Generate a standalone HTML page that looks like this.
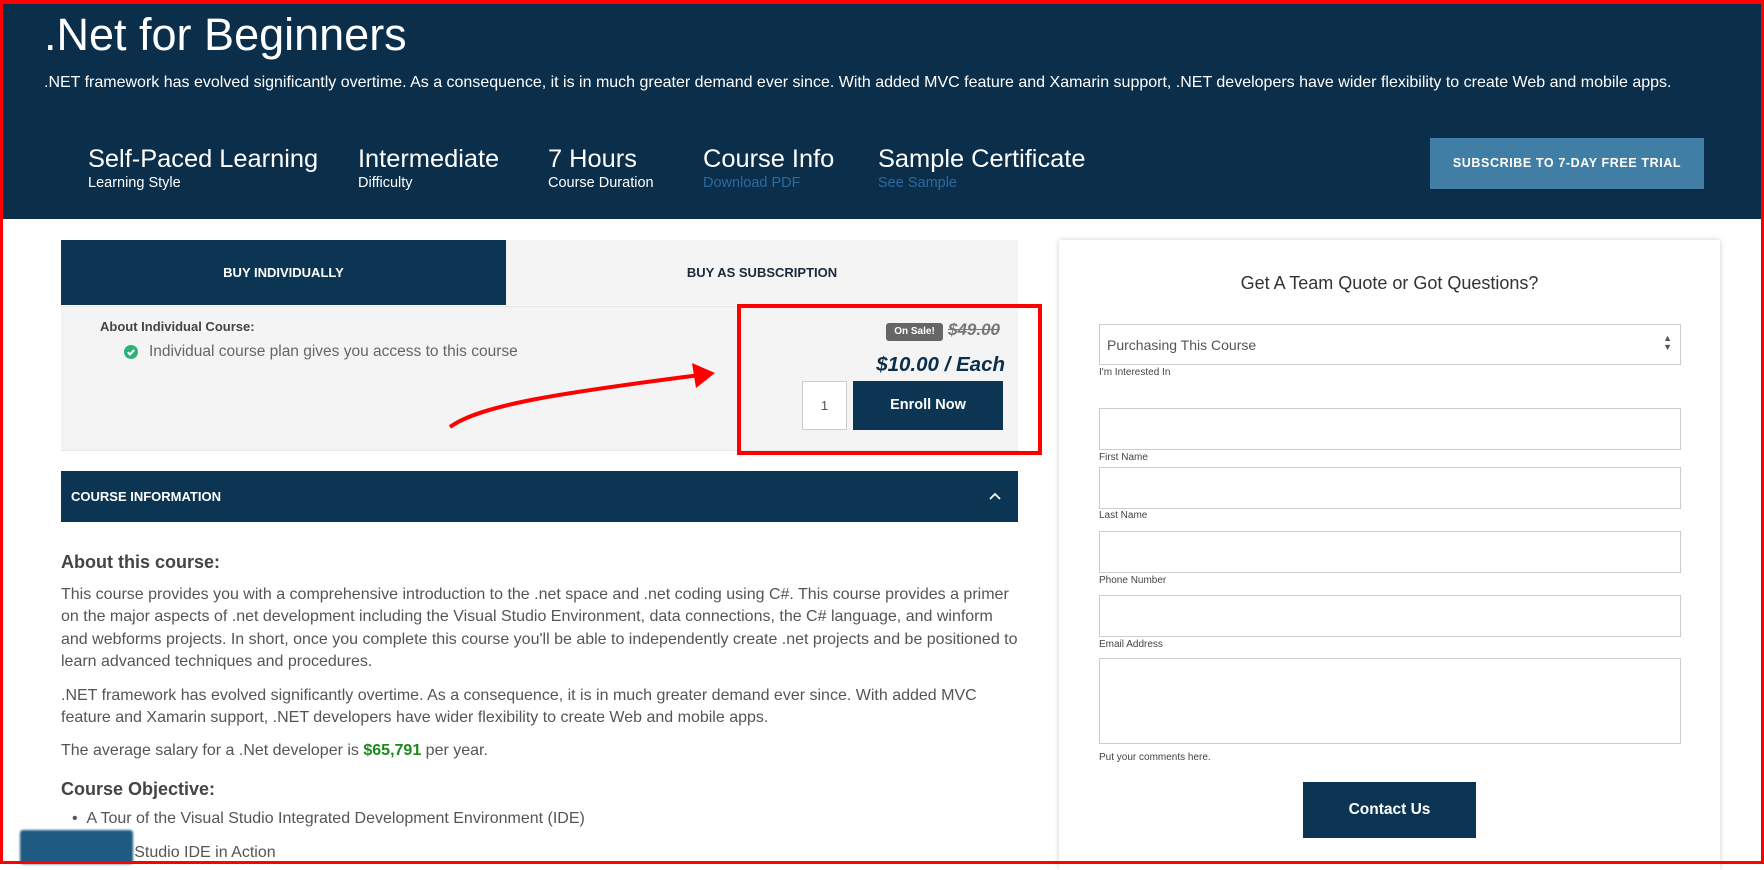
<!DOCTYPE html>
<html><head><meta charset="utf-8"><style>
*{box-sizing:border-box;margin:0;padding:0}
body{width:1764px;height:864px;overflow:hidden;background:#fff;font-family:"Liberation Sans",sans-serif;position:relative}
.a{position:absolute;white-space:nowrap}
.hdr{position:absolute;left:0;top:0;width:1764px;height:219px;background:#0b2f4b}
.w{color:#fff}
.big{font-size:25.4px;font-weight:300;color:#fff}
.lab{font-size:14.5px;color:#fff}
.lnk{font-size:14.5px;color:#2a6aa0}
.p{font-size:16px;color:#555;line-height:22.3px;position:absolute;left:61px;width:960px}
.inp{position:absolute;left:1099px;width:582px;height:42px;border:1px solid #ccc;background:#fff}
.fl{position:absolute;left:1099px;font-size:10px;color:#444}
</style></head><body>
<div class="hdr"></div>
<div class="a w" style="left:44px;top:9px;font-size:45px;font-weight:300">.Net for Beginners</div>
<div class="a w" style="left:44px;top:74px;font-size:16px">.NET framework has evolved significantly overtime. As a consequence, it is in much greater demand ever since. With added MVC feature and Xamarin support, .NET developers have wider flexibility to create Web and mobile apps.</div>
<div class="a big" style="left:88px;top:145px">Self-Paced Learning</div><div class="a lab" style="left:88px;top:175px">Learning Style</div>
<div class="a big" style="left:358px;top:145px">Intermediate</div><div class="a lab" style="left:358px;top:175px">Difficulty</div>
<div class="a big" style="left:548px;top:145px">7 Hours</div><div class="a lab" style="left:548px;top:175px">Course Duration</div>
<div class="a big" style="left:703px;top:145px">Course Info</div><div class="a lnk" style="left:703px;top:175px">Download PDF</div>
<div class="a big" style="left:878px;top:145px">Sample Certificate</div><div class="a lnk" style="left:878px;top:175px">See Sample</div>
<div class="a" style="left:1430px;top:138px;width:274px;height:51px;background:#417ea5;color:#fff;font-size:12.5px;font-weight:bold;letter-spacing:0.6px;text-align:center;line-height:51px">SUBSCRIBE TO 7-DAY FREE TRIAL</div>

<div class="a" style="left:61px;top:240px;width:957px;height:65px;background:#f4f4f4"></div>
<div class="a" style="left:61px;top:240px;width:445px;height:65px;background:#0b3552;color:#fff;font-size:13px;font-weight:bold;text-align:center;line-height:65px">BUY INDIVIDUALLY</div>
<div class="a" style="left:506px;top:240px;width:512px;height:65px;color:#1a2a3a;font-size:13px;font-weight:bold;text-align:center;line-height:65px">BUY AS SUBSCRIPTION</div>
<div class="a" style="left:61px;top:306px;width:957px;height:145px;background:#f4f4f4;border-top:1px solid #e6e6e6;border-bottom:1px solid #e6e6e6"></div>
<div class="a" style="left:100px;top:319px;font-size:13px;font-weight:bold;color:#444">About Individual Course:</div>
<svg class="a" style="left:124px;top:345px" width="14" height="14"><circle cx="7" cy="7" r="7" fill="#2db37a"/><path d="M3.8 7.2l2.2 2.2 4.2-4.4" stroke="#fff" stroke-width="2" fill="none"/></svg>
<div class="a" style="left:149px;top:343px;font-size:15.5px;color:#666;font-weight:300">Individual course plan gives you access to this course</div>
<div class="a" style="left:886px;top:323px;width:57px;height:18px;background:#666;border-radius:3px;color:#fff;font-size:10px;font-weight:bold;text-align:center;line-height:18px">On Sale!</div>
<div class="a" style="left:948px;top:320px;font-size:17px;font-style:italic;font-weight:bold;color:#777;text-decoration:line-through">$49.00</div>
<div class="a" style="left:800px;top:353px;width:205px;text-align:right;font-size:20.5px;font-style:italic;font-weight:bold;color:#0b2f4b">$10.00 / Each</div>
<div class="a" style="left:802px;top:381px;width:45px;height:49px;background:#fff;border:1px solid #ccc;font-size:13px;color:#555;text-align:center;line-height:47px">1</div>
<div class="a" style="left:853px;top:381px;width:150px;height:49px;background:#0b3552;color:#fff;font-size:14.5px;font-weight:bold;text-align:center;line-height:49px">Enroll Now</div>
<div class="a" style="left:737px;top:304px;width:305px;height:151px;border:4px solid #f00"></div>
<svg class="a" style="left:440px;top:355px" width="290" height="80"><path d="M10 72 C40 50 120 38 260 20" stroke="#f00" stroke-width="4" fill="none"/><path d="M252 8 L275 18 L256 33 Z" fill="#f00"/></svg>

<div class="a" style="left:61px;top:471px;width:957px;height:51px;background:#0b3552;color:#fff;font-size:13px;font-weight:bold;line-height:51px;padding-left:10px">COURSE INFORMATION</div>
<svg class="a" style="left:988px;top:491px" width="14" height="10"><path d="M2 8l5-5 5 5" stroke="#fff" stroke-width="1.8" fill="none"/></svg>

<div class="a" style="left:61px;top:552px;font-size:18px;font-weight:bold;color:#444">About this course:</div>
<div class="p" style="top:584px">This course provides you with a comprehensive introduction to the .net space and .net coding using C#. This course provides a primer on the major aspects of .net development including the Visual Studio Environment, data connections, the C# language, and winform and webforms projects. In short, once you complete this course you'll be able to independently create .net projects and be positioned to learn advanced techniques and procedures.</div>
<div class="p" style="top:685px">.NET framework has evolved significantly overtime. As a consequence, it is in much greater demand ever since. With added MVC feature and Xamarin support, .NET developers have wider flexibility to create Web and mobile apps.</div>
<div class="p" style="top:740px">The average salary for a .Net developer is <b style="color:#1a8a1a">$65,791</b> per year.</div>
<div class="a" style="left:61px;top:779px;font-size:18px;font-weight:bold;color:#444">Course Objective:</div>
<div class="p" style="top:808px;left:72px">• &nbsp;A Tour of the Visual Studio Integrated Development Environment (IDE)</div>
<div class="p" style="top:842px;left:72px">• &nbsp;Visual Studio IDE in Action</div>
<div class="a" style="left:20px;top:830px;width:113px;height:34px;background:#1e5a82;border-radius:3px;filter:blur(1px)"></div>

<div class="a" style="left:1059px;top:240px;width:661px;height:630px;background:#fff;box-shadow:0 0 5px rgba(0,0,0,.2)"></div>
<div class="a" style="left:1059px;top:273px;width:661px;text-align:center;font-size:18px;color:#333;font-weight:300">Get A Team Quote or Got Questions?</div>
<div class="inp" style="top:324px;height:41px;font-size:14px;color:#555;padding:12px 7px">Purchasing This Course<span style="position:absolute;right:8px;top:9px;font-size:9px;line-height:9px;color:#555">▲<br>▼</span></div>
<div class="fl" style="top:367px">I'm Interested In</div>
<div class="inp" style="top:408px"></div><div class="fl" style="top:452px">First Name</div>
<div class="inp" style="top:467px"></div><div class="fl" style="top:510px">Last Name</div>
<div class="inp" style="top:531px"></div><div class="fl" style="top:575px">Phone Number</div>
<div class="inp" style="top:595px"></div><div class="fl" style="top:639px">Email Address</div>
<div class="inp" style="top:658px;height:86px"></div><div class="fl" style="top:752px">Put your comments here.</div>
<div class="a" style="left:1303px;top:782px;width:173px;height:56px;background:#0b3552;color:#fff;font-size:15.5px;font-weight:bold;text-align:center;line-height:56px">Contact Us</div>

<div class="a" style="left:0;top:0;width:1764px;height:864px;border:3px solid #f00;border-top-width:4px"></div>
</body></html>
